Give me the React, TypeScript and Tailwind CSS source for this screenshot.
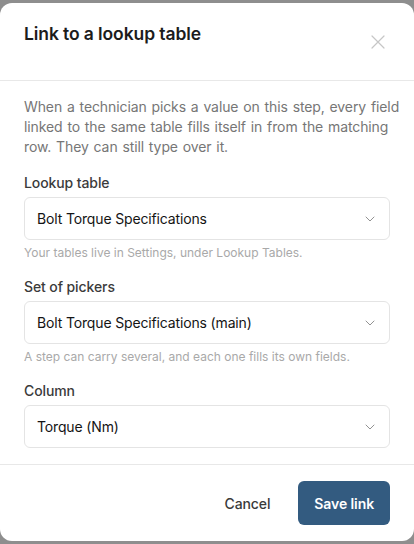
import React from "react";
import { ChevronDown } from "lucide-react";

const font = { fontFamily: "Inter, 'Liberation Sans', sans-serif" };

function Field({ label, value, helper }: { label: string; value: string; helper?: string }) {
  return (
    <div className="flex flex-col">
      <div className="text-[14px] leading-5 font-medium tracking-[-0.1px] text-[#3b3b3b]">{label}</div>
      <div className="mt-1 h-[43px] rounded-md border border-[#e4e4e4] bg-white flex items-center justify-between pl-3 pr-[11px]">
        <span className="text-[14px] tracking-[-0.15px] text-[#141414]">{value}</span>
        <ChevronDown size={16} strokeWidth={1.4} className="text-[#8a8a8a]" />
      </div>
      {helper && <div className="mt-[5px] text-[12px] leading-4 text-[#a9a9a9]">{helper}</div>}
    </div>
  );
}

export default function App() {
  return (
    <div className="w-[414px] h-[544px] bg-[#8e8e8e] overflow-hidden pt-[3px]" style={font}>
      <div className="w-[414px] h-[538px] bg-white rounded-xl flex flex-col">
        <div className="h-[77px] border-b border-[#e8e8e8] box-content flex items-start justify-between pl-6 pr-[29px]">
          <h2 className="pt-[17px] text-[17.5px] leading-7 font-semibold tracking-[-0.1px] text-[#1c1c1c]">Link to a lookup table</h2>
          <svg className="mt-[32px]" width="14" height="14" viewBox="0 0 14 14" fill="none" stroke="#c6c6c6" strokeWidth="1.2" strokeLinecap="round">
            <path d="M1 1L13 13M13 1L1 13" />
          </svg>
        </div>
        <div className="px-6 pt-4 pb-4 border-b border-[#e8e8e8] flex flex-col gap-4">
          <p className="text-[14px] leading-5 tracking-[-0.1px] [word-spacing:1px] whitespace-nowrap text-[#767676]">
            When a technician picks a value on this step, every field
            <br />
            linked to the same table fills itself in from the matching
            <br />
            row. They can still type over it.
          </p>
          <Field label="Lookup table" value="Bolt Torque Specifications" helper="Your tables live in Settings, under Lookup Tables." />
          <Field label="Set of pickers" value="Bolt Torque Specifications (main)" helper="A step can carry several, and each one fills its own fields." />
          <Field label="Column" value="Torque (Nm)" />
        </div>
        <div className="flex items-start justify-end gap-3 pl-6 pr-6 pt-4">
          <button className="h-11 px-4 text-[14px] font-medium tracking-[-0.1px] text-[#3a3a3a]">Cancel</button>
          <button className="h-11 px-4 rounded-md bg-[#335b80] text-[14px] font-semibold tracking-[-0.1px] text-white">Save link</button>
        </div>
      </div>
    </div>
  );
}
